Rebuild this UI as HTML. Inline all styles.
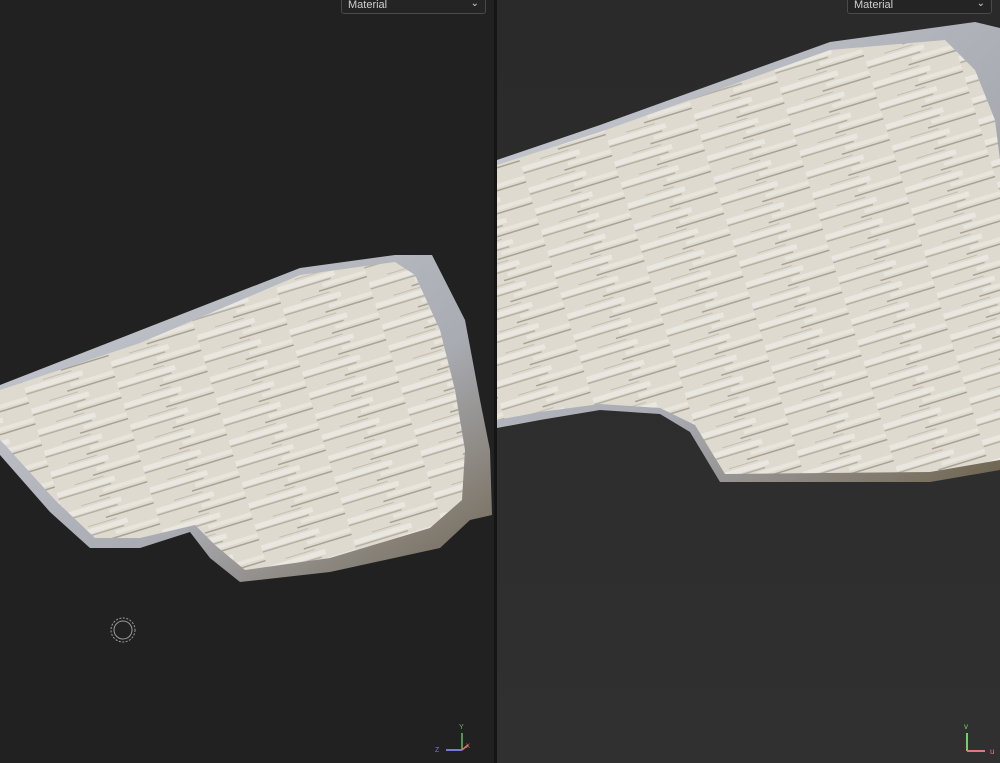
<!DOCTYPE html>
<html><head><meta charset="utf-8"><style>
html,body{margin:0;padding:0;width:1000px;height:763px;overflow:hidden;background:#212121;font-family:"Liberation Sans",sans-serif}
.dd{position:absolute;top:-6px;height:20px;border:1px solid #4a4a4a;border-radius:3px;background:#242424;color:#cfcfcf;font-size:11px;line-height:20px;padding-left:6px;box-sizing:border-box}
</style></head><body>
<svg width="1000" height="763" style="position:absolute;left:0;top:0">
<defs>
<linearGradient id="rbg" x1="0" y1="0" x2="0" y2="1"><stop offset="0" stop-color="#2a2a2a"/><stop offset="1" stop-color="#303030"/></linearGradient>
<linearGradient id="rim" x1="0" y1="0" x2="1" y2="1"><stop offset="0" stop-color="#c9ccd4"/><stop offset="0.6" stop-color="#a9abb2"/><stop offset="1" stop-color="#6f6450"/></linearGradient>
<pattern id="str" width="90" height="22" patternUnits="userSpaceOnUse" patternTransform="rotate(-17)">
<rect width="90" height="22" fill="#dedad0"/>
<rect x="0" y="4" width="60" height="5" fill="#eae7e0"/>
<rect x="45" y="13" width="45" height="4" fill="#e8e5dd"/>
<rect x="0" y="10" width="55" height="1.5" fill="#b6b0a2"/>
<rect x="40" y="19" width="50" height="1.5" fill="#a8a294"/>
<rect x="20" y="1" width="30" height="1" fill="#c4beb0"/>
</pattern>
</defs>
<rect x="0" y="0" width="494" height="763" fill="#212121"/>
<rect x="494" y="0" width="3" height="763" fill="#151515"/>
<rect x="497" y="0" width="503" height="763" fill="url(#rbg)"/>
<!-- left rock -->
<polygon points="0,385 300,268 395,255 432,255 465,320 480,400 490,450 492,515 470,520 440,548 330,572 240,582 210,558 190,532 140,548 90,548 50,512 0,455" fill="url(#rim)"/>
<polygon points="0,390 140,343 300,275 395,262 415,275 440,330 455,390 465,450 462,500 430,528 330,558 245,570 215,545 195,525 140,538 95,538 55,500 5,445 0,440" fill="url(#str)"/>
<!-- right rock -->
<polygon points="497,160 600,125 830,42 975,22 1000,28 1000,470 930,482 720,482 690,432 660,414 600,410 540,420 497,428" fill="url(#rim)"/>
<polygon points="497,165 600,132 830,50 945,40 975,70 995,120 1000,160 1000,460 930,472 725,474 695,425 660,408 600,404 540,412 497,420" fill="url(#str)"/>
<!-- cursor -->
<circle cx="123" cy="630" r="12" fill="none" stroke="#9a9a9a" stroke-width="1" stroke-dasharray="2,1.5"/>
<circle cx="123" cy="630" r="9" fill="none" stroke="#9a9a9a" stroke-width="1"/>
<!-- left gizmo -->
<line x1="462" y1="733" x2="462" y2="750" stroke="#5cc15c" stroke-width="1.5"/>
<line x1="446" y1="750" x2="462" y2="750" stroke="#7777e0" stroke-width="2"/>
<line x1="462" y1="750" x2="468" y2="745" stroke="#e07070" stroke-width="1.5"/>
<text x="459" y="729" font-size="7" fill="#5cc15c">Y</text>
<text x="435" y="752" font-size="7" fill="#7777e0">Z</text>
<text x="466" y="748" font-size="6" fill="#e07070">X</text>
<!-- right gizmo -->
<line x1="967" y1="733" x2="967" y2="751" stroke="#6cd06c" stroke-width="2"/>
<line x1="967" y1="751" x2="985" y2="751" stroke="#e07a7a" stroke-width="2"/>
<text x="964" y="729" font-size="8" fill="#6cd06c">v</text>
<text x="990" y="754" font-size="8" fill="#e07a7a">u</text>
</svg>
<div class="dd" style="left:341px;width:145px">Material<span style="position:absolute;right:6px;top:-1px;font-size:10px">&#8964;</span></div>
<div class="dd" style="left:847px;width:145px">Material<span style="position:absolute;right:6px;top:-1px;font-size:10px">&#8964;</span></div>
</body></html>
